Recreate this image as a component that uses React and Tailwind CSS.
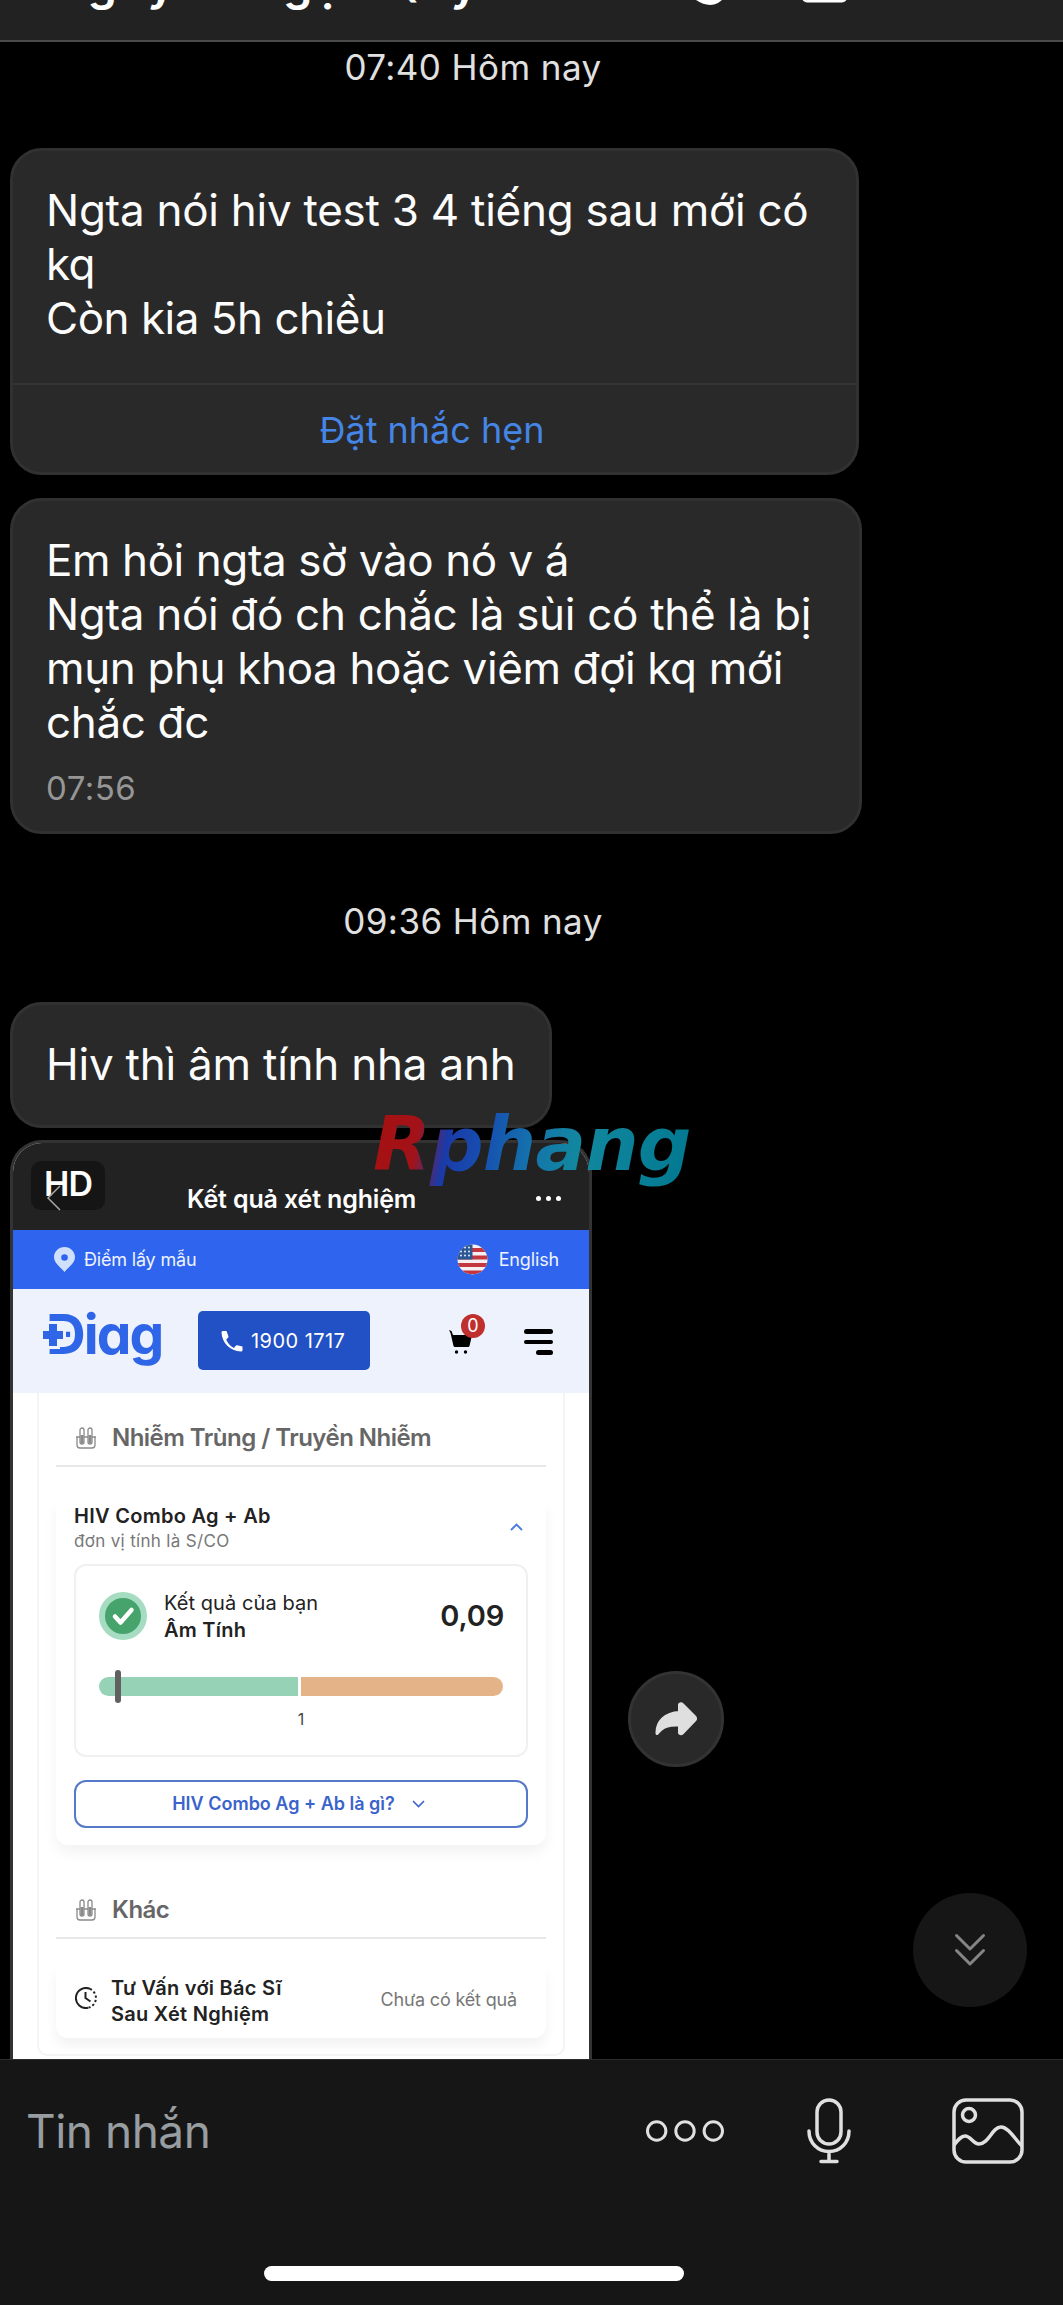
function T({ className = "", children }) {
  return <div className={"whitespace-pre " + className}>{children}</div>;
}

function Stamp({ children }) {
  return (
    <div className="-ml-[10px] flex h-10 w-[946px] shrink-0 justify-center text-[35px] leading-10 tracking-[0.42px] text-[#e0e0e0]">
      <T>{children}</T>
    </div>
  );
}

function Tubes() {
  return (
    <svg width="20" height="22" viewBox="0 0 20 22" fill="none" stroke="#8a8a8a" strokeWidth="1.3">
      <path d="M1 10v8a3 3 0 0 0 3 3h12a3 3 0 0 0 3-3v-8" />
      <path d="M0 10h4M16 10h4M8 10h4" />
      <rect x="4" y="1" width="4" height="16" rx="2" />
      <rect x="12" y="1" width="4" height="16" rx="2" />
      <path d="M6 8v8M14 8v8" strokeWidth="3" />
    </svg>
  );
}

function Flag() {
  return (
    <svg width="31" height="31" viewBox="0 0 31 31">
      <defs><clipPath id="flag"><circle cx="15.500" cy="15.500" r="15" /></clipPath></defs>
      <g clipPath="url(#flag)">
        <rect width="31" height="31" fill="#f6eff2" />
        {[4, 11.500, 19, 26.500].map((y) => <rect key={y} y={y} width="31" height="4" fill="#c4373f" />)}
        <rect width="15.500" height="15.500" fill="#2c5792" />
        {[3.500, 7.500, 11.500].map((y) => [4, 8, 12].map((x) => <circle key={x + "-" + y} cx={x} cy={y} r="1.100" fill="#cfe0f5" />))}
      </g>
    </svg>
  );
}

function PhoneShot() {
  return (
    <div className="h-[930px] w-[582px] shrink-0 overflow-hidden rounded-t-[32px] border-[3px] border-b-0 border-[#333] bg-white">
      <div className="flex h-[87px] bg-[#222]">
        <div className="relative mt-[18px] ml-[18px] flex h-[49px] w-[74px] shrink-0 justify-center rounded-[10px] bg-[#151515]">
          <T className="text-[34px] leading-[46px] font-semibold tracking-[-1px] text-white">HD</T>
          <svg className="absolute top-[23px] left-[15px]" width="16" height="28" viewBox="0 0 16 28" fill="none" stroke="#a6a6a6" strokeWidth="1.500"><path d="M14 2 2 14 14 26" /></svg>
        </div>
        <T className="mt-[40px] ml-[82px] w-[228px] text-[25px] leading-[32px] font-semibold tracking-[-0.14px] text-white">Kết quả xét nghiệm</T>
        <div className="mt-[53px] ml-[121px] flex gap-[5px]">
          {[0, 1, 2].map((i) => <span key={i} className="size-[5px] rounded-full bg-white" />)}
        </div>
      </div>

      <div className="flex h-[59px] items-center bg-[#2f65ee] pr-[30px] pl-[41px] text-[#eef3ff]">
        <svg width="21" height="25" viewBox="0 0 21 25" fill="#cfdffc" fillRule="evenodd"><path d="M10.500 0C4.700 0 0 4.500 0 10.200 0 16 6 19.500 10.500 25 15 19.500 21 16 21 10.200 21 4.500 16.300 0 10.500 0Zm0 7.200a3.300 3.300 0 1 1 0 6.600 3.300 3.300 0 0 1 0-6.600Z" /></svg>
        <T className="ml-[9px] text-[18px] leading-6 tracking-[-0.18px]">Điểm lấy mẫu</T>
        <div className="ml-auto flex items-center gap-[11px]"><Flag /><T className="text-[18px] leading-6 tracking-[-0.15px]">English</T></div>
      </div>

      <div className="flex h-[104px] bg-[#eef2fc]">
        <div className="relative mt-[5px] ml-[30px] w-[125px] shrink-0">
          <T className="ml-[3px] text-[55px] leading-[80px] font-bold tracking-[-1.9px] text-[#2f66e8] [font-feature-settings:'cv11']">Điag</T>
          <svg className="absolute top-[27px] -left-[3px]" width="26" height="28" viewBox="0 0 26 28"><path d="M9 3h8v7h6v8h-6v7H9v-7H3v-8h6Z" fill="#2f66e8" stroke="#eef2fc" strokeWidth="6" paintOrder="stroke" /></svg>
        </div>
        <div className="mt-[22px] ml-[30px] flex h-[59px] w-[172px] shrink-0 items-center rounded-[5px] bg-[#2250c5] pl-[23px] text-white">
          <svg width="22" height="22" viewBox="0 0 22 22" fill="#fff"><path d="M5.500 1 1.500 1Q.5 1 .5 2.500C1 13 9 21 20 21.500q1.500 0 1.500-1.200V16.500l-5.500-1.200q-1 0-1.500.8l-1.500 2C9.500 16.500 6.500 13 5.200 9.500l1.800-1.800q.6-.7.4-1.500Z" /></svg>
          <T className="ml-[8px] text-[20px] leading-6 tracking-[0.45px]">1900 1717</T>
        </div>
        <div className="relative mt-[41px] ml-[79px] h-6 w-[37px] shrink-0">
          <svg width="24" height="25" viewBox="0 0 24 25"><path d="M0 0l2.500 1 1.500 4h19l-2.500 11q-.3 1-1.500 1H6q-1.200 0-1.500-1L1.500 3Z" fill="#000" /><circle cx="7.500" cy="22" r="1.700" /><circle cx="16.500" cy="22" r="1.700" /></svg>
          <div className="absolute -top-4 left-3 flex size-6 items-center justify-center rounded-full bg-[#bf2f2e] text-[18px] leading-6 text-white">0</div>
        </div>
        <div className="mt-[40px] ml-[37px] flex w-[30px] shrink-0 flex-col items-end gap-[6px]">
          <span className="h-[5px] w-[29px] rounded-full bg-black" />
          <span className="h-1 w-[29px] rounded-full bg-black" />
          <span className="h-[5px] w-[17px] rounded-full bg-black" />
        </div>
      </div>

      <div className="mx-6 h-[663px] rounded-b-[10px] border-2 border-t-0 border-[#f4f4f4] px-[17px] text-[#222]">
        <div className="flex h-[74px] items-center gap-4 border-b-2 border-[#e8e8e8] pt-[18px] pl-[20px]">
          <Tubes />
          <T className="text-[24px] leading-8 font-semibold tracking-[-0.53px] text-[#666]">Nhiễm Trùng / Truyền Nhiễm</T>
        </div>
        <div className="mt-[33px] h-[345px] rounded-b-xl px-[18px] shadow-[0_8px_14px_rgba(0,0,0,0.05)]">
          <div className="flex">
            <div className="w-[436px]">
              <T className="mt-[4px] text-[20px] leading-[24px] font-semibold tracking-[0.28px]">HIV Combo Ag + Ab</T>
              <T className="mt-px text-[17px] leading-[24px] tracking-[0.33px] text-[#777]">đơn vị tính là S/CO</T>
            </div>
            <svg className="mt-[23px]" width="13" height="8" viewBox="0 0 13 8" fill="none" stroke="#4a7be0" strokeWidth="1.800"><path d="M1 7 6.500 1.500 12 7" /></svg>
          </div>
          <div className="mt-[11px] h-[193px] rounded-xl border-2 border-[#f0f0f0] px-[23px] pt-[26px]">
            <div className="flex h-12">
              <div className="flex size-12 items-center justify-center rounded-full bg-[#a5dcc2]">
                <svg width="36" height="36" viewBox="0 0 36 36" fill="none"><circle cx="18" cy="18" r="18" fill="#45a36b" /><path d="m10 18.500 5.500 6L26.500 12" stroke="#fff" strokeWidth="4.500" strokeLinecap="round" strokeLinejoin="round" /></svg>
              </div>
              <div className="-mt-[2px] ml-[17px] text-[20px] leading-[27px]">
                <T className="tracking-[0.08px]">Kết quả của bạn</T>
                <T className="font-semibold tracking-[0.25px]">Âm Tính</T>
              </div>
              <T className="mt-[4px] -mr-px ml-auto text-[29px] leading-[40px] font-semibold tracking-[-0.2px]">0,09</T>
            </div>
            <div className="relative mt-[37px] flex h-[19px] gap-[3px]">
              <div className="h-full w-[199px] rounded-l-full rounded-r-[3px] bg-[#95d2b6]" />
              <div className="h-full flex-1 rounded-l-[3px] rounded-r-full bg-[#e4b387]" />
              <div className="absolute -top-[7px] left-4 h-[33px] w-[6px] rounded-full bg-[#606060]" />
            </div>
            <div className="mt-[11px] text-center text-[16px] leading-6 text-[#444]">1</div>
          </div>
          <div className="mt-[23px] flex h-[48px] items-center justify-center gap-[17px] rounded-xl border-2 border-[#5578c8] pr-[5px] text-[#3b63cc]">
            <T className="text-[18px] leading-6 font-semibold">HIV Combo Ag + Ab là gì?</T>
            <svg width="13" height="8" viewBox="0 0 13 8" fill="none" stroke="#3b63cc" strokeWidth="1.600"><path d="M1 1 6.500 6.500 12 1" /></svg>
          </div>
        </div>
        <div className="mt-[20px] flex h-[74px] items-center gap-4 border-b-2 border-[#e8e8e8] pt-[17px] pl-[20px]">
          <Tubes />
          <T className="text-[24px] leading-8 font-semibold tracking-[-0.5px] text-[#666]">Khác</T>
        </div>
        <div className="mt-[27px] flex h-[72px] items-center rounded-b-xl pr-[29px] pb-[2px] pl-[19px] shadow-[0_8px_12px_rgba(0,0,0,0.05)]">
          <svg className="-mt-[6px]" width="22" height="22" viewBox="0 0 22 22" fill="none" stroke="#222" strokeWidth="2"><path d="M15 1.900A10 10 0 1 0 13 20.800" /><path d="M15 1.900A10 10 0 0 1 13 20.800" strokeDasharray="2.200 2.200" /><path d="M10.500 5v6l5 3.500" /></svg>
          <div className="ml-[14px] text-[20px] leading-[26.500px] font-semibold tracking-[0.27px]">
            <T>Tư Vấn với Bác Sĩ</T>
            <T>Sau Xét Nghiệm</T>
          </div>
          <T className="-mt-[3px] ml-auto text-[18px] leading-6 tracking-[-0.17px] text-[#777]">Chưa có kết quả</T>
        </div>
      </div>
    </div>
  );
}

export default function App() {
  return (
    <div className="relative flex h-[2305px] w-[1063px] flex-col overflow-hidden bg-black font-[Inter,'Noto_Sans',sans-serif]">
      <header className="relative h-[42px] shrink-0 overflow-hidden border-b-2 border-[#4b4b4b] bg-[#222]">
        <T className="-mt-[47px] ml-[51px] text-[47px] leading-[60px] font-semibold tracking-[0.9px] text-white">Nguyễn Ngọc Quý</T>
        <svg className="absolute top-0 left-[690px]" width="170" height="8" viewBox="0 0 170 8"><path d="M6 0q12 8 22 3l4-3Z" fill="#fff" /><rect x="112" y="-20" width="45" height="22.500" rx="5" fill="#fff" /></svg>
      </header>

      <main className="flex h-[2017px] shrink-0 flex-col overflow-hidden pt-[5px] pl-[10px] text-[44px] leading-[54px] text-[#fcfcfc]">
        <Stamp>07:40 Hôm nay</Stamp>

        <div className="mt-[61px] flex h-[327px] w-[849px] shrink-0 flex-col rounded-[32px] border-[3px] border-[#313131] bg-[#292929]">
          <div className="h-[234px] border-b-2 border-[#353535] pt-[32px] pl-[33px]">
            <T className="tracking-[-0.27px]">Ngta nói hiv test 3 4 tiếng sau mới có</T>
            <T className="tracking-[-0.7px]">kq</T>
            <T className="tracking-[-0.5px]">Còn kia 5h chiều</T>
          </div>
          <div className="flex flex-1 items-center justify-center pt-[2px] pr-[5px] text-[36px] text-[#4585e6]"><T>Đặt nhắc hẹn</T></div>
        </div>

        <div className="mt-[23px] h-[336px] w-[852px] shrink-0 rounded-[32px] border-[3px] border-[#313131] bg-[#292929] pt-[32px] pl-[33px]">
          <T className="tracking-[-0.43px]">Em hỏi ngta sờ vào nó v á</T>
          <T className="tracking-[-0.32px]">Ngta nói đó ch chắc là sùi có thể là bị</T>
          <T className="tracking-[-0.38px]">mụn phụ khoa hoặc viêm đợi kq mới</T>
          <T className="tracking-[-0.35px]">chắc đc</T>
          <T className="mt-[19px] text-[33px] leading-10 tracking-[0.5px] text-[#969696]">07:56</T>
        </div>

        <div className="mt-[67px] flex shrink-0"><Stamp>09:36 Hôm nay</Stamp></div>

        <div className="mt-[61px] h-[126px] w-[542px] shrink-0 rounded-[32px] border-[3px] border-[#313131] bg-[#292929] pt-[32px] pl-[33px]">
          <T className="tracking-[-0.23px]">Hiv thì âm tính nha anh</T>
        </div>

        <div className="mt-3 flex gap-9">
          <PhoneShot />
          <button className="mt-[531px] flex size-24 items-center justify-center rounded-full border-3 border-[#333] bg-[#292929]">
            <svg width="42" height="34" viewBox="0 0 42 34" fill="#dfdfdf" stroke="#dfdfdf" strokeWidth="3" strokeLinejoin="round"><path d="M24.500 2.500q1.500-1.500 3 0L40 15q1 1.500 0 3L27.500 31q-1.500 1.500-3 0V23C14 22.500 8 24 2 31.500 1.500 20 10 11 24.500 10.500Z" /></svg>
          </button>
        </div>
      </main>

      <footer className="h-[246px] shrink-0 border-t border-[#2d2d2d] bg-[#161616]">
        <div className="flex h-[142px] items-center pl-[26px]">
          <T className="w-[620px] text-[46px] leading-[60px] tracking-[-0.5px] text-[#979da1]">Tin nhắn</T>
          <svg width="78" height="22" viewBox="0 0 78 22" fill="none" stroke="#e0e0e0" strokeWidth="3"><circle cx="10.700" cy="11" r="9.200" /><circle cx="39" cy="11" r="9.200" /><circle cx="67.300" cy="11" r="9.200" /></svg>
          <svg className="ml-[83px]" width="44" height="66" viewBox="0 0 44 66" fill="none" stroke="#e0e0e0" strokeWidth="3.500"><rect x="10" y="2" width="24" height="44" rx="12" /><path d="M2 33C2 45 11 53.500 22 53.500S42 45 42 33M22 54v9M14 63.500h16" strokeLinecap="round" /></svg>
          <svg className="ml-[101px]" width="72" height="66" viewBox="0 0 72 66" fill="none" stroke="#e0e0e0" strokeWidth="3.500"><rect x="2" y="2" width="68" height="62" rx="12" /><circle cx="17" cy="17" r="6.500" /><path d="M2 47C6 42 9 38 13 38c6 0 8 8 14 8 10 0 13-17 22-17 8 0 15 14 21 19" /></svg>
        </div>
        <div className="mt-[64px] ml-[264px] h-[15px] w-[420px] rounded-full bg-white" />
      </footer>

      <div className="absolute top-[1893px] left-[913px] flex size-[114px] items-center justify-center rounded-full bg-[#161616]">
        <svg width="32" height="34" viewBox="0 0 32 34" fill="none" stroke="#858585" strokeWidth="3" strokeLinecap="round" strokeLinejoin="round"><path d="M2.500 2.500 16 16 29.500 2.500M2.500 17.500 16 31 29.500 17.500" /></svg>
      </div>

      <div className="absolute top-[1099px] left-[373px]">
        <T className="bg-[linear-gradient(100deg,#a61111_0%,#a31218_15%,#1a3aa8_24%,#1650b0_36%,#1474ac_50%,#12889f_64%,#00788f_100%)] bg-clip-text pb-3 font-['DejaVu_Sans'] text-[75px] leading-[90px] font-bold tracking-[-0.8px] text-transparent italic">Rphang</T>
      </div>
    </div>
  );
}
